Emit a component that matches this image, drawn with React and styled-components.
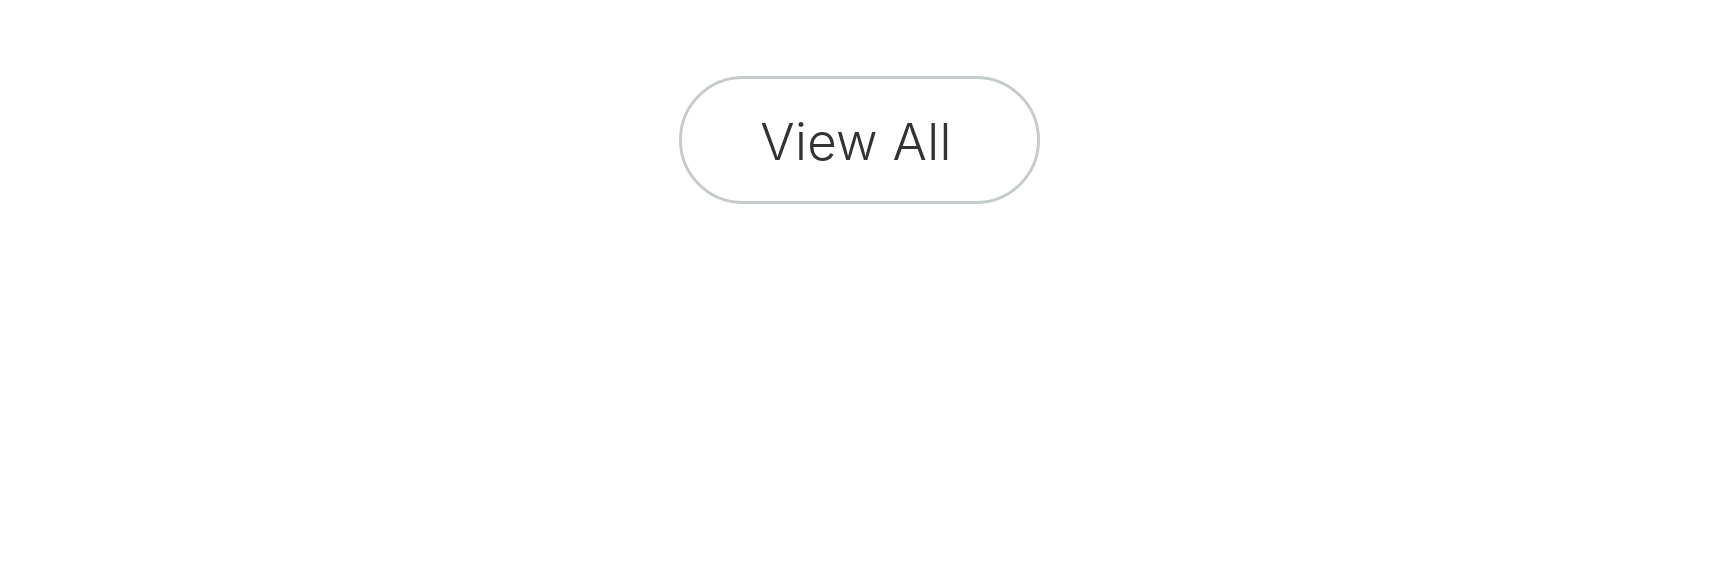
import React from 'react';
import styled, { createGlobalStyle } from 'styled-components';

const GlobalStyle = createGlobalStyle`
  body {
    margin: 0;
    background: #fff;
    font-family: Inter, "Liberation Sans", sans-serif;
  }
`;

const Section = styled.section`
  display: flex;
  justify-content: center;
  padding-top: 76px;
  min-height: 570px;
  box-sizing: border-box;
`;

const PillButton = styled.button`
  width: 361px;
  height: 128px;
  box-sizing: border-box;
  border: 3px solid #c6cccd;
  border-radius: 64px;
  background: #fff;
  color: #333;
  font-family: Inter, "Liberation Sans", sans-serif;
  font-weight: 300;
  font-size: 51px;
  letter-spacing: 0.3px;
  display: flex;
  align-items: center;
  justify-content: center;
  padding: 2px 6px 0 0;
  cursor: pointer;
`;

export default function App() {
  return (
    <>
      <GlobalStyle />
      <Section>
        <PillButton>View All</PillButton>
      </Section>
    </>
  );
}
